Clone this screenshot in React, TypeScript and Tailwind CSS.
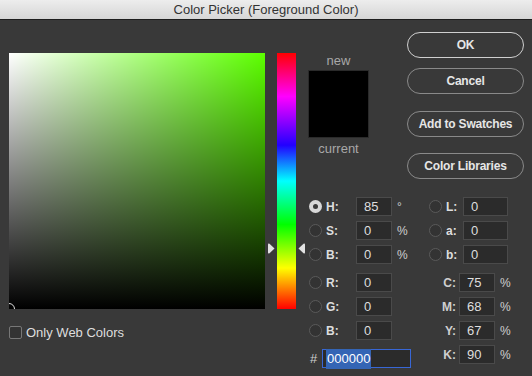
import React from 'react';

const font = { fontFamily: '"Liberation Sans", Arial, sans-serif' };

const Radio: React.FC<{ checked?: boolean }> = ({ checked }) =>
  checked ? (
    <span className="flex h-[13px] w-[13px] shrink-0 items-center justify-center rounded-full bg-[#d8d8d8]">
      <span className="h-[5px] w-[5px] rounded-full bg-[#3a3a3a]" />
    </span>
  ) : (
    <span className="h-[13px] w-[13px] shrink-0 rounded-full border border-[#5a5a5a] bg-[#333333]" />
  );

const Field: React.FC<{ value: string; w: string }> = ({ value, w }) => (
  <div className={`flex h-[19px] ${w} items-center border border-[#4a4a4a] bg-[#2b2b2b] pl-[7px] text-[13px] text-[#dedede]`}>
    {value}
  </div>
);

const Row: React.FC<{ label: string; value: string; unit?: string; checked?: boolean }> = ({ label, value, unit, checked }) => (
  <div className="flex h-[19px] items-center">
    <Radio checked={checked} />
    <span className="ml-[4px] w-[30px] text-[12px] font-bold text-[#dedede]">{label}</span>
    <Field value={value} w="w-[36px]" />
    <span className="ml-[5px] text-[12px] text-[#cfcfcf]">{unit}</span>
  </div>
);

const LabRow: React.FC<{ label: string; value: string }> = ({ label, value }) => (
  <div className="flex h-[19px] items-center">
    <Radio />
    <span className="ml-[4px] w-[17px] text-[12px] font-bold text-[#dedede]">{label}</span>
    <Field value={value} w="w-[45px]" />
  </div>
);

const CmykRow: React.FC<{ label: string; value: string }> = ({ label, value }) => (
  <div className="flex h-[19px] items-center">
    <span className="w-[30px] pr-[3px] text-right text-[12px] font-bold text-[#cfcfcf]">{label}</span>
    <Field value={value} w="w-[36px]" />
    <span className="ml-[5px] text-[12px] text-[#cfcfcf]">%</span>
  </div>
);

const Button: React.FC<{ label: string; primary?: boolean }> = ({ label, primary }) => (
  <button
    className={`flex h-[26px] w-[117px] items-center justify-center rounded-full border text-[12px] font-bold tracking-[-0.2px] text-[#e6e6e6] ${
      primary ? 'border-[#d0d0d0]' : 'border-[#8a8a8a]'
    }`}
  >
    {label}
  </button>
);

export default function App() {
  return (
    <div className="h-[376px] w-[532px] overflow-hidden bg-[#393939]" style={font}>
      {/* Title bar */}
      <div className="flex h-[20px] items-center justify-center border-b border-[#1e1e1e] bg-gradient-to-b from-[#ededed] to-[#d6d6d6] text-[13px] text-[#333333]">
        Color Picker (Foreground Color)
      </div>

      <div className="flex pt-[12px]">
        {/* Left: colour field + hue slider */}
        <div className="ml-[9px] mt-[21px] flex flex-col">
          <div className="flex">
            <div className="relative h-[256px] w-[256px] overflow-hidden bg-[#5cff00]">
              <div className="absolute inset-0 bg-gradient-to-r from-white to-transparent" />
              <div className="absolute inset-0 bg-gradient-to-b from-transparent to-black" />
              <div className="absolute left-[-6px] top-[250px] h-[12px] w-[12px] rounded-full border-[1.5px] border-[#e0e0e0]" />
            </div>
            <div className="relative ml-[12px] h-[256px] w-[19px] bg-[linear-gradient(to_bottom,#ff0000_0%,#ff00ff_17%,#2200ff_36%,#00ffff_50%,#00ff00_67%,#ffff00_84%,#ff0000_100%)]">
              <svg className="absolute left-[-9px] top-[190px]" width="7" height="11" viewBox="0 0 7 11">
                <path d="M0 1.5 Q0 0 1.5 0.8 L6.5 5.5 L1.5 10.2 Q0 11 0 9.5 Z" fill="#e2e2e2" />
              </svg>
              <svg className="absolute left-[21px] top-[190px]" width="7" height="11" viewBox="0 0 7 11">
                <path d="M7 1.5 Q7 0 5.5 0.8 L0.5 5.5 L5.5 10.2 Q7 11 7 9.5 Z" fill="#e2e2e2" />
              </svg>
            </div>
          </div>
          <label className="mt-[14px] flex items-center">
            <span className="h-[13px] w-[13px] rounded-[2px] border border-[#777777] bg-[#333333]" />
            <span className="ml-[4px] text-[13px] text-[#dedede]">Only Web Colors</span>
          </label>
        </div>

        {/* Right area */}
        <div className="ml-[12px] flex flex-col">
          <div className="flex">
            <div className="mt-[21px] flex w-[61px] flex-col items-center">
              <span className="h-[16px] text-[13px] leading-[16px] text-[#a8a8a8]">new</span>
              <div className="mt-[1px] h-[68px] w-[61px] border border-[#2a2a2a] bg-black" />
              <span className="mt-[3px] h-[16px] text-[13px] leading-[16px] text-[#a8a8a8]">current</span>
            </div>
            <div className="ml-[38px] flex flex-col">
              <Button label="OK" primary />
              <div className="mt-[10px]">
                <Button label="Cancel" />
              </div>
              <div className="mt-[17px]">
                <Button label="Add to Swatches" />
              </div>
              <div className="mt-[16px]">
                <Button label="Color Libraries" />
              </div>
            </div>
          </div>

          {/* Values */}
          <div className="ml-[1px] mt-[18px] flex">
            <div className="flex w-[120px] flex-col">
              <div className="flex flex-col gap-[5px]">
                <Row label="H:" value="85" unit="°" checked />
                <Row label="S:" value="0" unit="%" />
                <Row label="B:" value="0" unit="%" />
              </div>
              <div className="mt-[9px] flex flex-col gap-[5px]">
                <Row label="R:" value="0" />
                <Row label="G:" value="0" />
                <Row label="B:" value="0" />
              </div>
              <div className="mt-[9px] flex items-center">
                <span className="ml-[1px] w-[12px] text-[13px] text-[#cfcfcf]">#</span>
                <div className="flex h-[19px] w-[89px] items-center border border-[#3867d6] bg-[#2b2b2b] pl-[3px] text-[13px]">
                  <span className="bg-[#3465b5] px-[1px] text-white">000000</span>
                </div>
              </div>
            </div>
            <div className="flex flex-col">
              <div className="flex flex-col gap-[5px]">
                <LabRow label="L:" value="0" />
                <LabRow label="a:" value="0" />
                <LabRow label="b:" value="0" />
              </div>
              <div className="mt-[9px] flex flex-col gap-[5px]">
                <CmykRow label="C:" value="75" />
                <CmykRow label="M:" value="68" />
                <CmykRow label="Y:" value="67" />
                <CmykRow label="K:" value="90" />
              </div>
            </div>
          </div>
        </div>
      </div>
    </div>
  );
}
